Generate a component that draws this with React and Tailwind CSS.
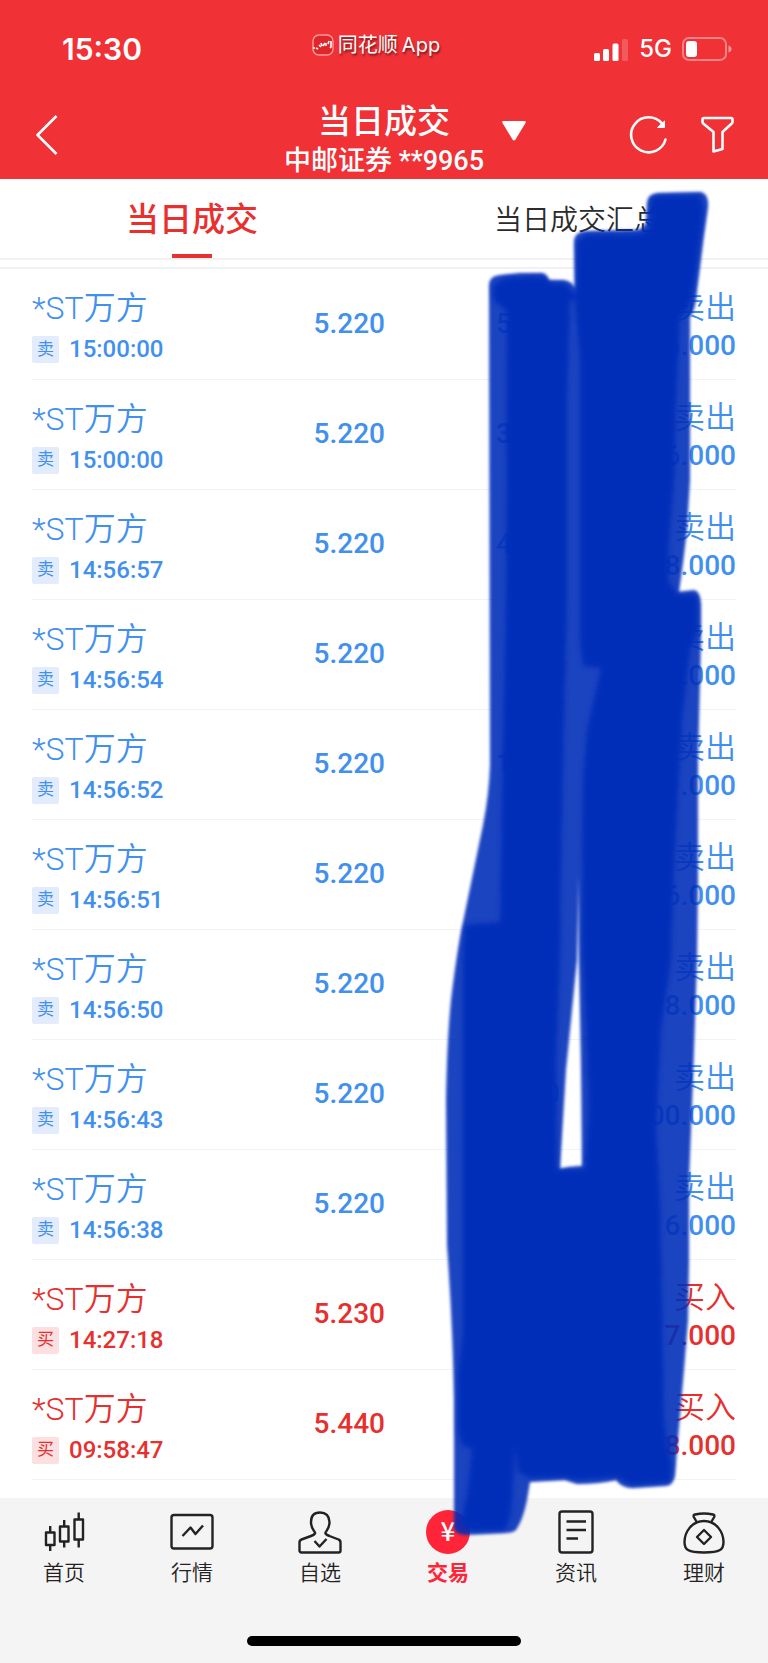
import React, { useState } from 'react'

const trades = [
  { time: '15:00:00', side: 'sell', price: '5.220', lead: '5', tail: '', amount: '6.000' },
  { time: '15:00:00', side: 'sell', price: '5.220', lead: '3', tail: '', amount: '6.000' },
  { time: '14:56:57', side: 'sell', price: '5.220', lead: '4', tail: '', amount: '8.000' },
  { time: '14:56:54', side: 'sell', price: '5.220', lead: '', tail: '', amount: '.000' },
  { time: '14:56:52', side: 'sell', price: '5.220', lead: '1', tail: '', amount: '.000' },
  { time: '14:56:51', side: 'sell', price: '5.220', lead: '', tail: '', amount: '6.000' },
  { time: '14:56:50', side: 'sell', price: '5.220', lead: '', tail: '', amount: '8.000' },
  { time: '14:56:43', side: 'sell', price: '5.220', lead: '', tail: '0', amount: '00.000' },
  { time: '14:56:38', side: 'sell', price: '5.220', lead: '', tail: '', amount: '6.000' },
  { time: '14:27:18', side: 'buy', price: '5.230', lead: '', tail: '', amount: '7.000' },
  { time: '09:58:47', side: 'buy', price: '5.440', lead: '', tail: '', amount: '8.000' },
]

const StatusBar = () => {
  return (
    <div className="grid h-[98px] grid-cols-3 items-center px-9">
      <div className="pl-[26px] font-['Inter',sans-serif] text-[30px] font-semibold leading-9">15:30</div>
      <div className="flex items-center justify-center gap-1 pb-2 pr-4 [text-shadow:1px_2px_2px_rgba(0,0,0,0.5)]">
        <svg width="22" height="22" viewBox="0 0 22 22" fill="none">
          <rect x="1" y="1" width="20" height="20" rx="6" fill="#e0262a" stroke="#ff9a9a" strokeWidth="1.4" />
          <path d="M2 13v2M4 14l2 1M7 11l2 2M9 9l1 3M11 12l2-3M14 12V9M16 10l1-3M19 7v6l-1 1" stroke="#fff" strokeWidth="1.6" />
        </svg>
        <span className="flex gap-1 text-xl leading-6">
          同花顺<span className="font-['Inter',sans-serif]">App</span>
        </span>
      </div>
      <div className="flex items-center justify-end gap-[10px]">
        <svg width="35" height="23" viewBox="0 0 35 23" fill="#fff">
          <rect x="0" y="15" width="6" height="8" rx="1.5" />
          <rect x="9" y="11" width="6" height="12" rx="1.5" />
          <rect x="18.5" y="5.5" width="6" height="17.5" rx="1.5" />
          <rect x="28" y="1" width="6" height="22" rx="1.5" opacity="0.2" />
        </svg>
        <span className="font-['Inter',sans-serif] text-2xl font-medium leading-6">5G</span>
        <svg width="50" height="24" viewBox="0 0 50 24">
          <rect x="1" y="1" width="43" height="22" rx="6" fill="none" stroke="#fff" strokeWidth="2" opacity="0.4" />
          <rect x="4" y="4" width="11" height="16" rx="3" fill="#fff" />
          <path d="M46.5 8.5q3 1 3 3.5t-3 3.5z" fill="#fff" opacity="0.5" />
        </svg>
      </div>
    </div>
  )
}

const Header = () => {
  return (
    <header className="bg-[#f03136] text-white">
      <StatusBar />
      <div className="grid h-[81px] grid-cols-[1fr_auto_1fr] items-center px-[34px]">
        <div className="pb-2">
          <button type="button" aria-label="返回" className="block">
            <svg width="26" height="40" viewBox="0 0 26 40" fill="none" stroke="#fff" strokeWidth="2.6">
              <path d="M22.5 1L3.5 20l19 19" strokeLinejoin="round" />
            </svg>
          </button>
        </div>
        <div className="flex flex-col items-center pt-[3px]">
          <h1 className="text-[33px] font-medium leading-[42px]">当日成交</h1>
          <p className="text-[27px] font-medium leading-9">中邮证券 <span className="font-['Roboto',sans-serif]">**9965</span></p>
        </div>
        <div className="flex items-center pb-2 pl-[18px]">
          <button type="button" aria-label="切换账户" className="pb-2">
            <svg className="block" width="24" height="20" viewBox="0 0 24 20" fill="#fff">
              <path d="M1.5 0h21q2 0 1 2L13.5 18.500q-1.500 2-3 0L.5 2Q-.5 0 1.500 0z" />
            </svg>
          </button>
          <button type="button" aria-label="刷新" className="ml-auto">
            <svg className="block" width="38" height="38" viewBox="0 0 38 38" fill="none" stroke="#fff" strokeWidth="2.6">
              <path d="M36.500 23.500A17.500 17.500 0 1 1 33 7.500" strokeLinecap="round" />
              <path d="M35.500 5v6.500h-7z" fill="#fff" strokeWidth="1" />
            </svg>
          </button>
          <button type="button" aria-label="筛选" className="ml-[34px]">
            <svg className="block" width="33" height="38" viewBox="0 0 33 38" fill="none" stroke="#fff" strokeWidth="2.6" strokeLinejoin="round">
              <path d="M3 2h27q1.500 0 1.500 1.500V6q0 1-1 1.700L21.500 16V33l-9 2.500V16L2.500 7.700q-1-.7-1-1.700V3.500Q1.500 2 3 2z" />
            </svg>
          </button>
        </div>
      </div>
    </header>
  )
}

const Tabs = () => {
  const [tab, setTab] = useState(0)
  const names = ['当日成交', '当日成交汇总']
  return (
    <div role="tablist" className="grid grid-cols-2 border-b-2 border-[#f1f1f1]">
      {names.map((name, i) => (
        <button
          key={name}
          type="button"
          role="tab"
          aria-selected={tab === i}
          onClick={() => setTab(i)}
          className="flex h-[79px] flex-col items-center"
        >
          <span
            className={
              tab === i
                ? 'h-[75px] text-[33px] font-medium leading-[82px] text-[#e9302f]'
                : 'h-[75px] pl-1 text-[28px] font-[350] leading-[84px] text-[#2b2b2b]'
            }
          >
            {name}
          </span>
          {tab === i && <span className="h-1 w-10 bg-[#e9302f]" />}
        </button>
      ))}
    </div>
  )
}

const TradeRow = ({ trade }) => {
  const sell = trade.side === 'sell'
  return (
    <tr className={sell ? 'h-[110px] border-b border-[#f3f3f3] text-[#4290ee]' : 'h-[110px] border-b border-[#f3f3f3] text-[#e6302e]'}>
      <td className="w-2/5 pt-1">
        <div className="text-[32px] font-[350] leading-10">*ST万方</div>
        <div className="mt-2 flex items-center gap-[10px]">
          <span
            className={
              sell
                ? 'flex size-[27px] items-center justify-center rounded-xs bg-[#e2ecfc] text-[17px]'
                : 'flex size-[27px] items-center justify-center rounded-xs bg-[#fce0e1] text-[17px]'
            }
          >
            {sell ? '卖' : '买'}
          </span>
          <span className="text-2xl font-medium leading-[27px]">{trade.time}</span>
        </div>
      </td>
      <td className="w-1/10 pr-0.5 text-right text-[28px] font-medium leading-8">{trade.price}</td>
      <td className="w-1/4 pl-28 text-[28px] font-medium leading-8">
        <div className="flex h-8 justify-between">
          <span>{trade.lead}</span>
          <span>{trade.tail}</span>
        </div>
      </td>
      <td className="pt-1 text-right">
        <div className="text-[31px] font-[350] leading-10">{sell ? '卖出' : '买入'}</div>
        <div className="text-[28px] font-medium leading-9">{trade.amount}</div>
      </td>
    </tr>
  )
}

// marker strokes drawn over the amount columns
const Marker = () => {
  return (
    <svg className="pointer-events-none absolute left-0 top-0 w-full" viewBox="0 0 768 1663" fill="#002fb9" aria-hidden="true">
      <defs>
        <filter id="edge" x="-5%" y="-5%" width="110%" height="110%">
          <feGaussianBlur stdDeviation="1.5" />
        </filter>
        <filter id="core" x="-5%" y="-5%" width="110%" height="110%">
          <feGaussianBlur stdDeviation="2.4" />
        </filter>
      </defs>
      <path
        filter="url(#edge)"
        opacity="0.89"
        fillRule="evenodd"
        d="M489 285Q489 276 500 275L520 273L542 273Q547 274 549 280L564 280Q573 282 575 288L574 240Q575 232 586 231L635 230Q645 229 646 222L647 202Q648 194 658 193L701 192Q709 194 708 207L704 235L697 290Q696 310 690 317L690 480L687 530L683 563L679 592L694 590Q700 591 701 604L701 640L698 760L698 880L697 960L693 1080L689 1180L689 1260L688 1320L684 1370L677 1450L675 1476Q673 1486 664 1486L632 1488Q622 1488 616 1480Q600 1484 577 1484L565 1480L530 1482L527 1500Q523 1520 516 1530Q513 1533 505 1533L465 1535Q456 1535 454 1528L454 1400Q453 1330 447 1245L446 1100Q447 1040 451 1000Q457 950 463 922L483 825Q489 795 490 765Z
        M579 875L577 960L566 1070L560 1169L570 1167L582 1166L581 1070L579 960Z"
      />
      <path
        filter="url(#core)"
        fillRule="evenodd"
        d="M493 286L505 278L543 276L550 283L566 284L576 296L577 242L585 235L642 234L650 228L651 198L656 196L700 195L704 210L698 255L694 288L688 308L680 318L676 400L674 480L669 540L668 580L677 594L697 595L698 630L690 650L682 720L677 810L673 890L671 960L661 1030L656 1130L660 1200L662 1300L664 1420L668 1450L672 1465L670 1482L632 1485L616 1477L577 1480L565 1477L530 1478L518 1472L515 1447L512 1500Q511 1520 505 1530L472 1531L461 1523L468 1490L472 1449L462 1445L458 1430L458 1370L463 1335L463 960L465 925L500 922L503 740L506 600L507 312L494 300Z
        M570 300L567 400L567 600L564 720L561 870L560 960L556 1060L557 1170L585 1169L589 1110L586 1020L582 940L583 780L587 730L601 668L583 666L580 640L580 360L575 300Z"
      />
    </svg>
  )
}

const HomeIcon = () => (
  <svg width="44" height="44" viewBox="0 0 44 44" fill="none" stroke="#222" strokeWidth="2.4" strokeLinejoin="round">
    <path d="M4 22.500h8.500V35H4zM8.200 16v6.500M8.200 35v6M18 16.500h8.500v15H18zM22.200 10v6.500M22.200 31.500v6M32.500 9.500H41v20h-8.500zM36.700 2.500v7M36.700 29.500v8" />
  </svg>
)

const MarketIcon = () => (
  <svg width="44" height="44" viewBox="0 0 44 44" fill="none" stroke="#222" strokeWidth="2.4" strokeLinejoin="round">
    <rect x="1.500" y="5" width="41" height="33.500" rx="2.500" />
    <path d="M12.500 26l8-8.500 5 6.500 7.500-8.500" />
  </svg>
)

const UserIcon = () => (
  <svg width="44" height="44" viewBox="0 0 44 44" fill="none" stroke="#222" strokeWidth="2.4" strokeLinejoin="round">
    <path d="M17 23.500q.5-1-1-2.500-3-4-3-9Q13 2.500 22 2.500T31.500 12q0 5-3 9-1.500 1.500-1 2.500 1 1.500 4 2.500l9 3.500q2 .7 2 3v8q0 2-2 2h-37q-2 0-2-2v-8q0-2.300 2-3L13 26q3-1 4-2.500z" />
    <path d="M16.500 31l5 5.500 7-7.500" />
  </svg>
)

const TradeIcon = () => (
  <span className="flex size-11 items-start justify-center rounded-full bg-[#ff2437] font-['Noto_Sans_CJK_SC',sans-serif] text-[26px] font-medium leading-10 text-white">¥</span>
)

const NewsIcon = () => (
  <svg width="44" height="44" viewBox="0 0 44 44" fill="none" stroke="#222" strokeWidth="2.4" strokeLinejoin="round">
    <rect x="5.500" y="1.500" width="33" height="41" rx="2.500" />
    <path d="M12.500 11.500H32M12.500 20H32M12.500 28.500H24" />
  </svg>
)

const MoneyIcon = () => (
  <svg width="44" height="44" viewBox="0 0 44 44" fill="none" stroke="#222" strokeWidth="2.400" strokeLinejoin="round">
    <path d="M15 12.500L11.800 7q-.8-2 1.200-2.500 9-2 18 0 2 .5 1.200 2.500L29 12.500" />
    <path d="M22 11C9 11 2.500 23 2.500 32c0 7.500 3 10.500 19.500 10.500S41.500 39.500 41.500 32C41.500 23 35 11 22 11z" />
    <path d="M22 20l7 7-7 7-7-7z" />
  </svg>
)

const menu = [
  { label: '首页', icon: <HomeIcon /> },
  { label: '行情', icon: <MarketIcon /> },
  { label: '自选', icon: <UserIcon /> },
  { label: '交易', icon: <TradeIcon />, active: true },
  { label: '资讯', icon: <NewsIcon /> },
  { label: '理财', icon: <MoneyIcon /> },
]

const BottomNav = () => {
  return (
    <footer className="mt-[18px] bg-[#f4f4f4] pb-[17px] pt-3">
      <nav className="grid grid-cols-6">
        {menu.map((m) => (
          <a key={m.label} href="#" className="flex flex-col items-center gap-1">
            {m.icon}
            <span className={m.active ? 'text-[21px] font-bold leading-[30px] text-[#ff2437]' : 'text-[21px] font-[350] leading-[30px] text-[#222]'}>
              {m.label}
            </span>
          </a>
        ))}
      </nav>
      <div className="mx-auto mt-12 h-[10px] w-[274px] rounded-full bg-black" />
    </footer>
  )
}

export default function App() {
  return (
    <div className="relative bg-white font-['Roboto','Noto_Sans_CJK_SC',sans-serif]">
      <Header />
      <Tabs />
      <main className="mt-[7px] border-t-2 border-[#f1f1f1] px-8">
        <table className="w-full table-fixed border-collapse">
          <tbody>
            {trades.map((t, i) => (
              <TradeRow key={i} trade={t} />
            ))}
          </tbody>
        </table>
      </main>
      <BottomNav />
      <Marker />
    </div>
  )
}
